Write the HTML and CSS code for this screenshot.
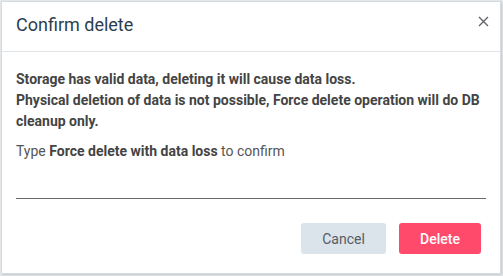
FILE: index.html
```html
<!DOCTYPE html>
<html>
<head>
<meta charset="utf-8">
<link rel="stylesheet" href="styles.css">
</head>
<body>
<div class="dialog">
  <div class="header">
    <h1 class="title">Confirm delete</h1>
    <button class="close" aria-label="Close">
      <svg width="11" height="11" viewBox="0 0 11 11"><path d="M1 1L10 10M10 1L1 10" stroke="#5f6368" stroke-width="1.4" fill="none"/></svg>
    </button>
  </div>
  <div class="body">
    <p class="warning">Storage has valid data, deleting it will cause data loss.<br>Physical deletion of data is not possible, Force delete operation will do DB cleanup only.</p>
    <p class="hint">Type <b>Force delete with data loss</b> to confirm</p>
    <input class="field" type="text">
  </div>
  <div class="footer">
    <button class="btn cancel">Cancel</button>
    <button class="btn delete">Delete</button>
  </div>
</div>
</body>
</html>
```
FILE: styles.css
```css
html, body {
  margin: 0;
  padding: 0;
  background: #e6e9ec;
  font-family: Roboto, "Liberation Sans", sans-serif;
}
body {
  padding: 1px 2px 2px 1px;
  height: 276px;
  box-sizing: border-box;
}
.dialog {
  background: #fff;
  width: 500px;
  height: 273px;
  box-sizing: border-box;
  border: 1px solid #d7dbe0;
  box-shadow: 1px 1px 2px rgba(0,0,0,0.15);
  display: flex;
  flex-direction: column;
}
.header {
  height: 50px;
  border-bottom: 1px solid #e1e5e9;
  display: flex;
  align-items: center;
  justify-content: space-between;
  padding: 0 10px 4px 14px;
  box-sizing: border-box;
}
.title {
  margin: 0;
  font-size: 18px;
  font-weight: 400;
  color: #2b3e50;
}
.close {
  border: 0;
  background: none;
  padding: 0;
  margin-top: -6px;
  width: 14px;
  height: 14px;
  display: flex;
  align-items: center;
  justify-content: center;
}
.body {
  padding: 17px 14px 0 14px;
  color: #444;
  font-size: 14px;
}
.warning {
  margin: 0;
  font-weight: 700;
  line-height: 21px;
}
.hint {
  margin: 9px 0 0 0;
  line-height: 21px;
  color: #555;
}
.hint b {
  color: #444;
}
.field {
  display: block;
  width: 100%;
  box-sizing: border-box;
  height: 33px;
  margin-top: 4px;
  border: 0;
  border-bottom: 1px solid #6b6b6b;
  outline: none;
  font: inherit;
}
.footer {
  display: flex;
  justify-content: flex-end;
  gap: 13px;
  padding: 24px 19px 0 0;
}
.btn {
  height: 31px;
  border: 0;
  border-radius: 3px;
  font-family: Roboto, "Liberation Sans", sans-serif;
  font-size: 14px;
}
.cancel {
  width: 85px;
  background: #dbe3eb;
  color: #555c63;
}
.delete {
  width: 82px;
  background: #ff4a6b;
  color: #fff;
  font-weight: 500;
}
```
